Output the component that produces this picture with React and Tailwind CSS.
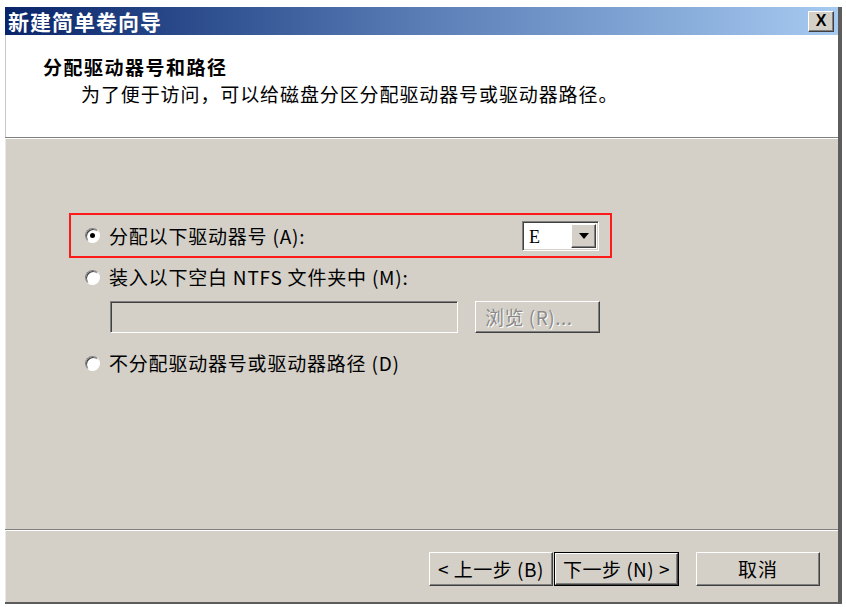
const raised =
  "border border-t-white border-l-white border-r-[#404040] border-b-[#404040] shadow-[inset_-1px_-1px_0_#808080] bg-[#d4d0c8]";
const sunken =
  "border border-t-[#808080] border-l-[#808080] border-r-white border-b-white shadow-[inset_1px_1px_0_#404040,inset_-1px_-1px_0_#d4d0c8]";
const label = "font-['Noto_Sans_CJK_SC',sans-serif] text-[19px] leading-[24px] whitespace-nowrap";

const Radio = ({ checked }) => (
  <div className="w-[15px] h-[15px] rounded-full bg-white border border-t-[#808080] border-l-[#808080] border-r-white border-b-white shadow-[inset_1px_1px_0_#404040] flex items-center justify-center shrink-0">
    {checked && <div className="w-[5px] h-[5px] rounded-full bg-black" />}
  </div>
);

const App = () => {
  return (
    <div className="w-[846px] h-[607px] bg-white overflow-hidden font-['Noto_Sans_CJK_SC',sans-serif]">
      <div className="ml-[5px] mt-[7px] w-[837px] h-[597px] flex flex-col border-r-4 border-r-[#5c5c5c] border-b-2 border-b-[#5c5c5c]">
        {/* title bar */}
        <div className="h-[28px] flex items-center justify-between pl-[3px] pr-[4px] bg-linear-to-r from-[#0a246a] via-[#5a7db6] to-[#a6caf0]">
          <span className="text-white font-bold text-[21px] tracking-[1px] leading-none">新建简单卷向导</span>
          <div className={`${raised} w-[26px] h-[21px] flex items-center justify-center`}>
            <span className="font-['Liberation_Sans',sans-serif] font-bold text-[16px] leading-none text-black">X</span>
          </div>
        </div>

        {/* header */}
        <div className="h-[102px] bg-white border-l border-l-[#c8c8c8] pl-[37px] pt-[20px]">
          <div className="text-[19px] font-bold tracking-[1.5px] leading-[24px] text-black">分配驱动器号和路径</div>
          <div className="pl-[38px] text-[19px] tracking-[0.9px] leading-[24px] text-black mt-[3px]">
            为了便于访问，可以给磁盘分区分配驱动器号或驱动器路径。
          </div>
        </div>
        <div className="h-[2px] border-t border-t-[#808080] border-b border-b-white" />

        {/* body */}
        <div className="h-[390px] bg-[#d4d0c8] border-l border-l-[#e8e8e8] pt-[74px] text-black">
          <div className="ml-[63px] w-[543px] h-[45px] border-2 border-[#ff1a1a] flex items-center pl-[14px] pr-[11px]">
            <Radio checked />
            <span className={`${label} ml-[9px] tracking-[0.8px]`}>分配以下驱动器号 (A):</span>
            <div className={`${sunken} ml-auto w-[77px] h-[30px] bg-white flex items-stretch p-[2px]`}>
              <span className="flex-1 pl-[4px] font-['Liberation_Serif',serif] text-[18px] leading-[26px]">E</span>
              <div className={`${raised} w-[25px] flex items-center justify-center`}>
                <svg width="10" height="6" viewBox="0 0 10 6">
                  <path d="M0 0H10L5 6Z" fill="#000" />
                </svg>
              </div>
            </div>
          </div>

          <div className="flex items-center ml-[79px] mt-[7px] h-[24px]">
            <Radio />
            <span className={`${label} ml-[9px] tracking-[0.8px]`}>装入以下空白 NTFS 文件夹中 (M):</span>
          </div>

          <div className="flex ml-[104px] mt-[12px] gap-[17px]">
            <div className={`${sunken} w-[348px] h-[32px] bg-[#d4d0c8]`} />
            <div className={`${raised} w-[125px] h-[32px] flex items-center pl-[9px]`}>
              <span className={`${label} text-[#8a8a8a] tracking-[0.5px] [text-shadow:1px_1px_0_#fff]`}>浏览 (R)...</span>
            </div>
          </div>

          <div className="flex items-center ml-[79px] mt-[18px] h-[24px]">
            <Radio />
            <span className={`${label} ml-[9px] tracking-[0.8px]`}>不分配驱动器号或驱动器路径 (D)</span>
          </div>
        </div>
        <div className="h-[2px] border-t border-t-[#808080] border-b border-b-white" />

        {/* footer */}
        <div className="flex-1 bg-[#d4d0c8] border-l border-l-[#e8e8e8] flex justify-end items-start pt-[21px] pr-[18px] text-black">
          <div className={`${raised} w-[124px] h-[34px] flex items-center justify-center`}>
            <span className={`${label} tracking-[0.5px]`}>&lt; 上一步 (B)</span>
          </div>
          <div className="ml-[1px] w-[125px] h-[34px] border border-black">
            <div className={`${raised} w-full h-full flex items-center justify-center`}>
              <span className={`${label} tracking-[0.5px]`}>下一步 (N) &gt;</span>
            </div>
          </div>
          <div className={`${raised} ml-[17px] w-[124px] h-[34px] flex items-center justify-center`}>
            <span className={`${label} tracking-[1px]`}>取消</span>
          </div>
        </div>
      </div>
    </div>
  );
};

export default App;
